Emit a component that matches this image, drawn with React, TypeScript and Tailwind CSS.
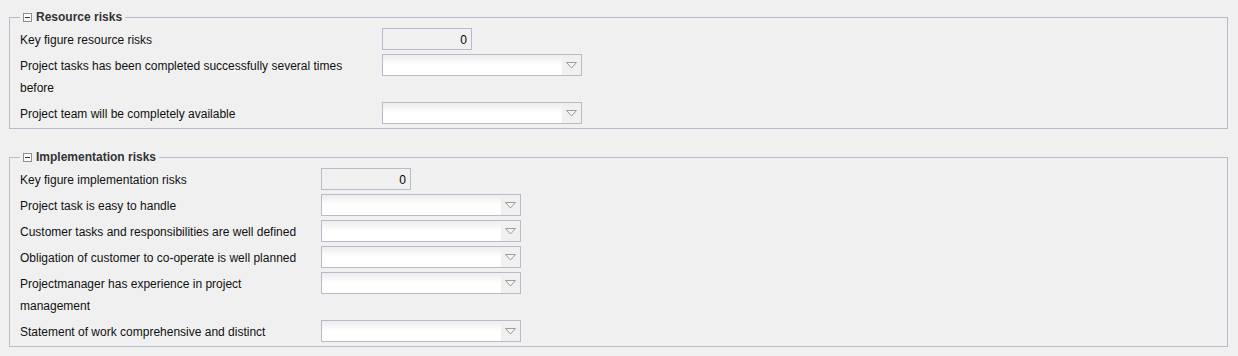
import React from "react"

type Row = { label: string; kind: "number" | "combo"; value?: string }

const resourceRows: Row[] = [
  { label: "Key figure resource risks", kind: "number", value: "0" },
  { label: "Project tasks has been completed successfully several times before", kind: "combo" },
  { label: "Project team will be completely available", kind: "combo" },
]

const implementationRows: Row[] = [
  { label: "Key figure implementation risks", kind: "number", value: "0" },
  { label: "Project task is easy to handle", kind: "combo" },
  { label: "Customer tasks and responsibilities are well defined", kind: "combo" },
  { label: "Obligation of customer to co-operate is well planned", kind: "combo" },
  { label: "Projectmanager has experience in project management", kind: "combo" },
  { label: "Statement of work comprehensive and distinct", kind: "combo" },
]

function CollapseIcon() {
  return (
    <span className="flex h-[9px] w-[9px] items-center justify-center border border-[#8e8e8e] bg-[#fafafa]">
      <span className="h-px w-[5px] bg-[#333]" />
    </span>
  )
}

function NumberField({ value }: { value?: string }) {
  return (
    <div className="flex h-[22px] w-[90px] items-center justify-end border border-[#b8bbcc] bg-[#f0f0f0] pr-[4px] pt-px text-[12px] text-black">
      {value}
    </div>
  )
}

function Combo() {
  return (
    <div className="flex h-[22px] w-[200px] border border-[#b8bbcc] bg-white">
      <div className="flex-1 bg-gradient-to-b from-[#ededed] via-white to-white" />
      <div className="flex w-[19px] items-center justify-center bg-[#f0f0f0]">
        <svg width="11" height="7" viewBox="0 0 11 7">
          <path d="M0.5 0.5 H10.5 L5.5 6 Z" fill="#f4f4f4" stroke="#9c9c9c" strokeWidth="1" />
        </svg>
      </div>
    </div>
  )
}

function Section({
  title,
  rows,
  labelCol,
  className,
}: {
  title: string
  rows: Row[]
  labelCol: string
  className?: string
}) {
  return (
    <fieldset className={`border border-[#b8bbcc] pl-[10px] pr-[10px] pt-[4px] pb-[4px] ${className ?? ""}`}>
      <legend className="flex items-center gap-[4px] px-[3px] text-[12px] font-bold leading-[14px] text-[#333]">
        <CollapseIcon />
        {title}
      </legend>
      <div className={`grid ${labelCol} gap-y-[4px]`}>
        {rows.map((r) => (
          <React.Fragment key={r.label}>
            <div className="-mb-px pt-px text-[12px] leading-[22px] text-[#111]">{r.label}</div>
            <div>{r.kind === "number" ? <NumberField value={r.value} /> : <Combo />}</div>
          </React.Fragment>
        ))}
      </div>
    </fieldset>
  )
}

export default function App() {
  return (
    <div
      className="h-[356px] w-full bg-[#f0f0f0] pl-[9px] pr-[10px] pt-[10px]"
      style={{ fontFamily: '"Liberation Sans", Arial, sans-serif' }}
    >
      <Section
        title="Resource risks"
        rows={resourceRows}
        labelCol="grid-cols-[340px_1fr] gap-x-[22px]"
      />
      <Section
        title="Implementation risks"
        rows={implementationRows}
        labelCol="grid-cols-[290px_1fr] gap-x-[11px]"
        className="mt-[21px]"
      />
    </div>
  )
}
